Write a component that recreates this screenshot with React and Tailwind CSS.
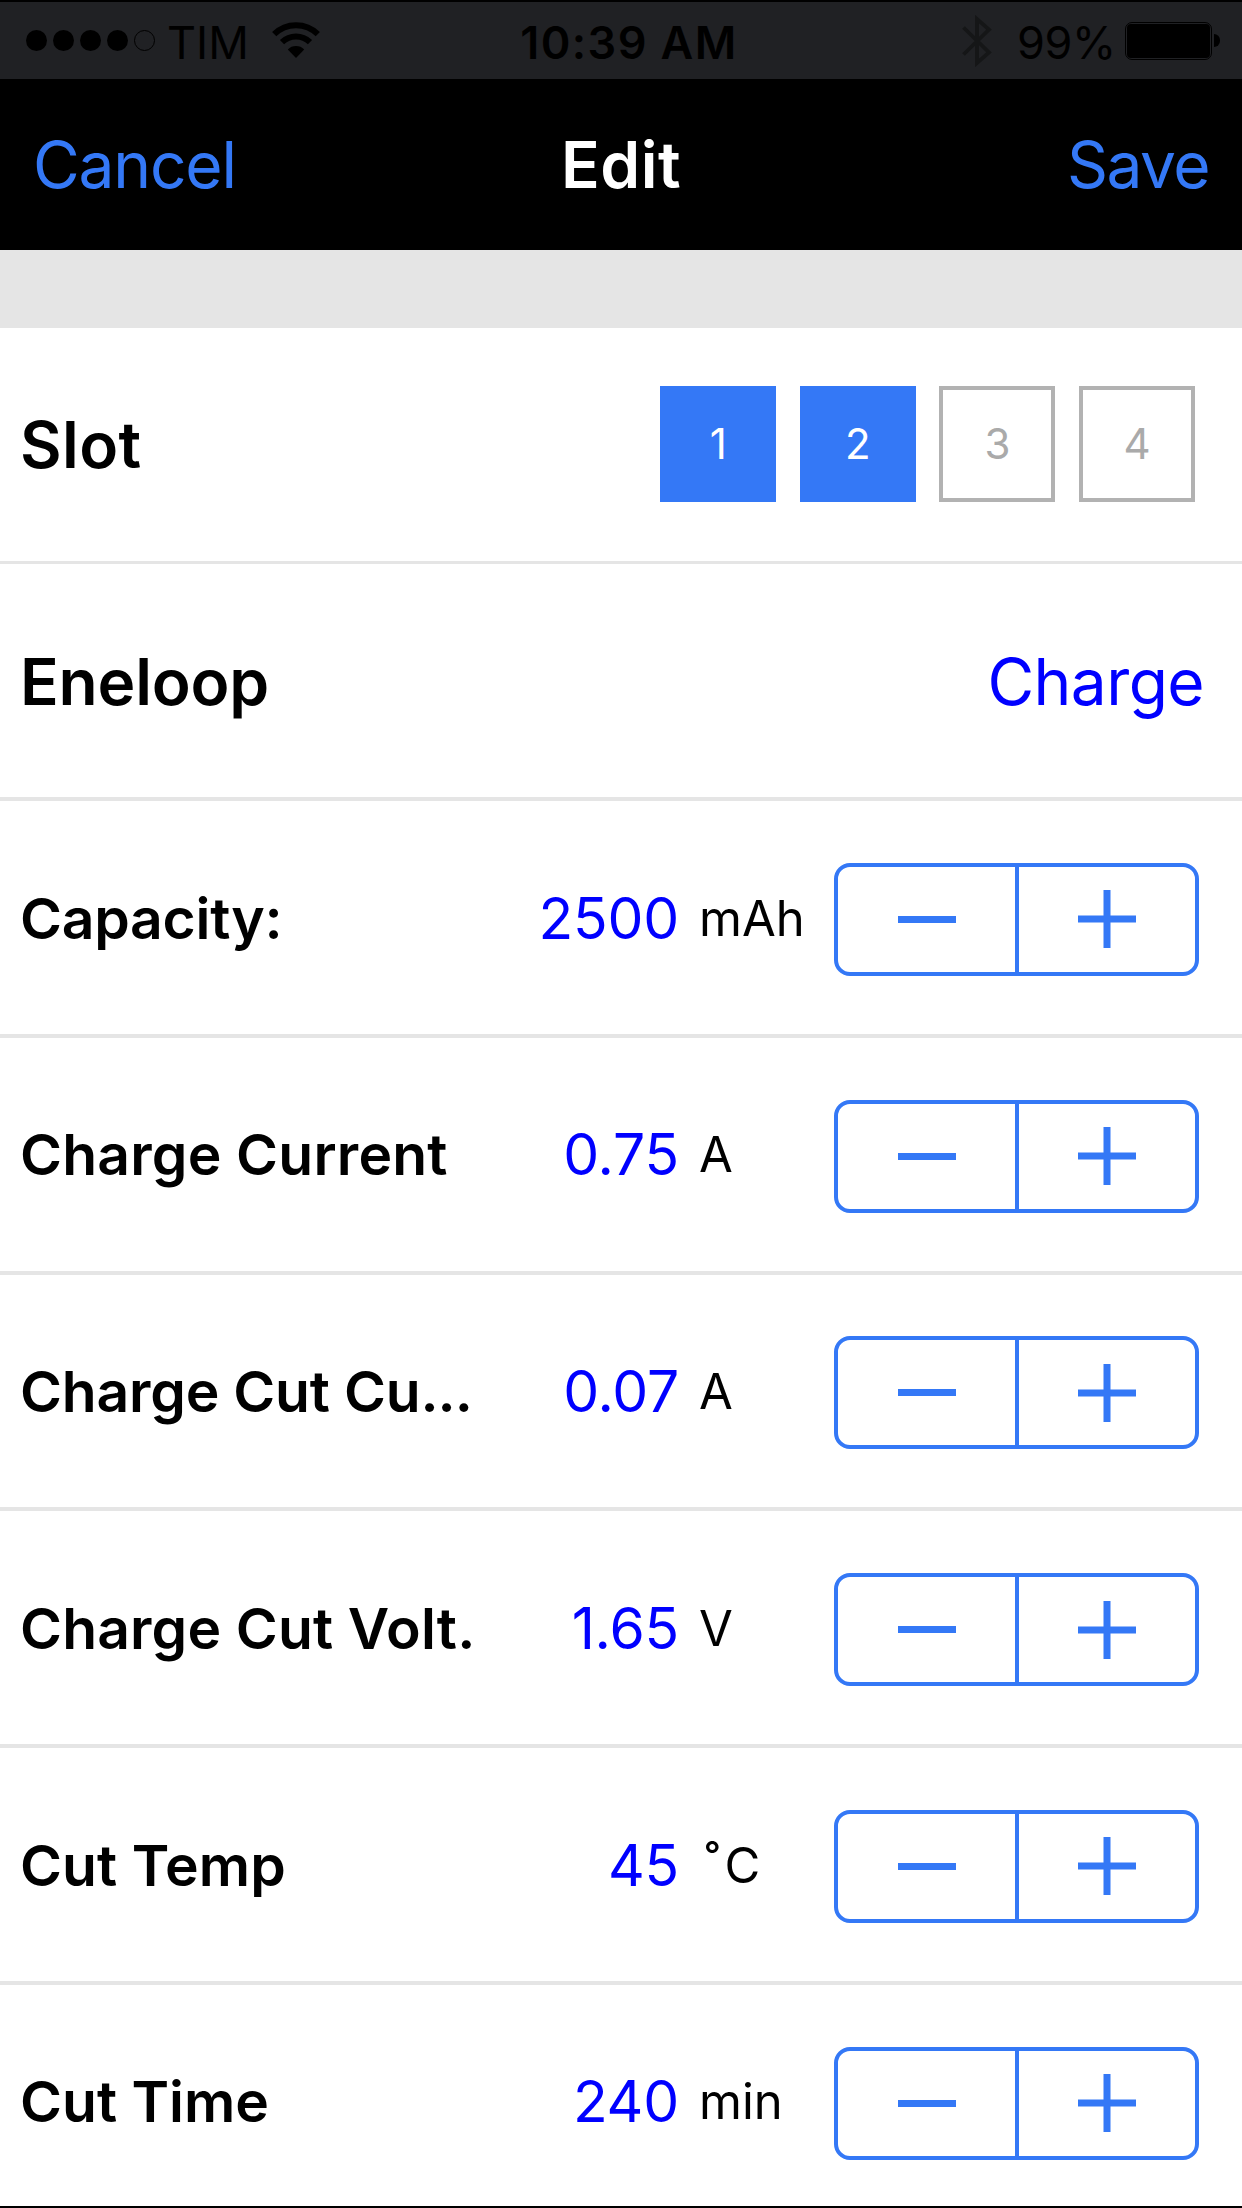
import { useState } from 'react'
import clsx from 'clsx'

const initialSettings = [
  { label: 'Capacity:', value: 2500, step: 100, digits: 0, unit: 'mAh', tracking: 'tracking-[-0.25px]' },
  { label: 'Charge Current', value: 0.75, step: 0.05, digits: 2, unit: 'A', tracking: 'tracking-[0.2px]' },
  { label: 'Charge Cut Cu...', value: 0.07, step: 0.01, digits: 2, unit: 'A', tracking: 'tracking-[-0.2px]' },
  { label: 'Charge Cut Volt.', value: 1.65, step: 0.01, digits: 2, unit: 'V', tracking: 'tracking-[0.15px]' },
  { label: 'Cut Temp', value: 45, step: 1, digits: 0, unit: '˚C', tracking: 'tracking-[0.1px]' },
  { label: 'Cut Time', value: 240, step: 10, digits: 0, unit: 'min', tracking: 'tracking-normal' },
]

function StatusBar() {
  return (
    <div className="flex h-[79px] items-center border-t-2 border-black bg-[#202124] text-[45px] leading-none text-black">
      <div className="flex w-[414px] items-center pl-[26px]">
        <div className="flex gap-[6px]">
          {[0, 1, 2, 3].map((i) => (
            <span key={i} className="size-[21px] rounded-full bg-black" />
          ))}
          <span className="size-[21px] rounded-full border border-black" />
        </div>
        <span className="ml-[12px] mt-[4px]">TIM</span>
        <svg className="-mt-px ml-[23px] h-[36px] w-[48px]" viewBox="0 0 48 36">
          <path d="M2.2 12.2a31 31 0 0 1 43.6 0" fill="none" stroke="#000" strokeWidth="6" />
          <path d="M10 20.2a20 20 0 0 1 28 0" fill="none" stroke="#000" strokeWidth="6" />
          <path d="M24 36L15.8 27.4a11.5 11.5 0 0 1 16.4 0z" />
        </svg>
      </div>
      <div className="mt-[4px] w-[430px] text-center font-semibold tracking-[1.4px]">10:39 AM</div>
      <div className="flex w-[398px] items-center justify-end pr-[22px]">
        <svg className="h-[52px] w-[30px]" viewBox="0 0 30 52">
          <path d="M1.5 12.5L27 37.5L15 48V4L27 14.5L1.5 39.5" fill="none" stroke="#151617" strokeWidth="3.8" />
        </svg>
        <span className="ml-[25px] mr-[9px] mt-[4px] tracking-[-0.3px]">99%</span>
        <div className="h-[38px] w-[87px] rounded-[7px] border border-black p-[1px]">
          <div className="h-full rounded-[4px] bg-black" />
        </div>
        <div className="ml-[2px] h-[13px] w-[6px] rounded-r-full bg-black" />
      </div>
    </div>
  )
}

function NavBar() {
  return (
    <div className="grid h-[171px] grid-cols-3 items-center bg-black px-[33px] text-[64px] leading-none text-[#3478f6]">
      <button className="text-left tracking-[-1.2px]">Cancel</button>
      <h1 className="text-center font-semibold tracking-[0.5px] text-white">Edit</h1>
      <button className="text-right tracking-[-1.5px]">Save</button>
    </div>
  )
}

function Stepper({ onChange }) {
  return (
    <div className="mt-[2px] flex h-[113px] w-[365px] rounded-[16px] border-4 border-[#3478f6] text-[#3478f6]">
      <button
        className="flex w-[181px] items-center justify-center border-r-4 border-[#3478f6]"
        onClick={() => onChange(-1)}
      >
        <span className="h-[7px] w-[58px] bg-[#3478f6]" />
      </button>
      <button className="flex w-[176px] items-center justify-center" onClick={() => onChange(1)}>
        <svg className="size-[58px]" viewBox="0 0 58 58">
          <path d="M0 29H58M29 0V58" stroke="currentColor" strokeWidth="7" />
        </svg>
      </button>
    </div>
  )
}

function Label({ text, tracking }) {
  const truncated = text.endsWith('...')
  return (
    <div className={clsx('w-[470px] whitespace-nowrap text-[57px] font-semibold', tracking)}>
      {truncated ? text.slice(0, -3) : text}
      {truncated && <span className="tracking-[-1px]">...</span>}
    </div>
  )
}

function Unit({ unit }) {
  if (unit === '˚C') {
    return (
      <div className="w-[155px] pl-[26px] text-[49px]">
        <span className="relative -top-[2px] mr-[5px]">˚</span>C
      </div>
    )
  }
  return <div className="w-[155px] pl-[20px] text-[49px]">{unit}</div>
}

function SettingRow({ setting, onChange }) {
  return (
    <div className="flex h-[236.75px] items-center border-b-4 border-[#e5e5e5] pl-[20px] pt-[2px]">
      <Label text={setting.label} tracking={setting.tracking} />
      <div className="w-[189px] text-right text-[57px] tracking-[-0.2px] text-[#0000ff]">
        {setting.value.toFixed(setting.digits)}
      </div>
      <Unit unit={setting.unit} />
      <Stepper onChange={onChange} />
    </div>
  )
}

export default function App() {
  const [slots, setSlots] = useState([1, 2])
  const [settings, setSettings] = useState(initialSettings)

  const toggleSlot = (n) => {
    setSlots(slots.includes(n) ? slots.filter((s) => s !== n) : [...slots, n])
  }

  const changeSetting = (index, dir) => {
    setSettings(settings.map((s, i) => (i === index ? { ...s, value: s.value + dir * s.step } : s)))
  }

  return (
    <div className="h-[2208px] w-[1242px] overflow-hidden border-b-2 border-black bg-white font-['Inter',sans-serif] text-black">
      <StatusBar />
      <NavBar />
      <div className="h-[78px] bg-[#e5e5e5]" />

      <div className="flex h-[236px] items-center justify-between border-b-[3px] border-[#e5e5e5] pl-[20px] pr-[47px]">
        <span className="text-[64px] font-semibold tracking-[0.4px]">Slot</span>
        <div className="flex gap-[23.6px] pb-[2px]">
          {[1, 2, 3, 4].map((n) => (
            <button
              key={n}
              onClick={() => toggleSlot(n)}
              className={clsx(
                'size-[116px] text-[42px]',
                slots.includes(n) ? 'bg-[#3478f6] text-white' : 'border-4 border-[#b2b2b2] text-[#aaaaaa]'
              )}
            >
              {n}
            </button>
          ))}
        </div>
      </div>

      <div className="flex h-[237px] items-center justify-between border-b-4 border-[#e5e5e5] pl-[20px] pr-[38px] pt-[2px] text-[64px]">
        <span className="font-semibold tracking-[-0.2px]">Eneloop</span>
        <span className="tracking-[-0.6px] text-[#0000ff]">Charge</span>
      </div>

      <div>
        {settings.map((setting, i) => (
          <SettingRow key={setting.label} setting={setting} onChange={(dir) => changeSetting(i, dir)} />
        ))}
      </div>
    </div>
  )
}
